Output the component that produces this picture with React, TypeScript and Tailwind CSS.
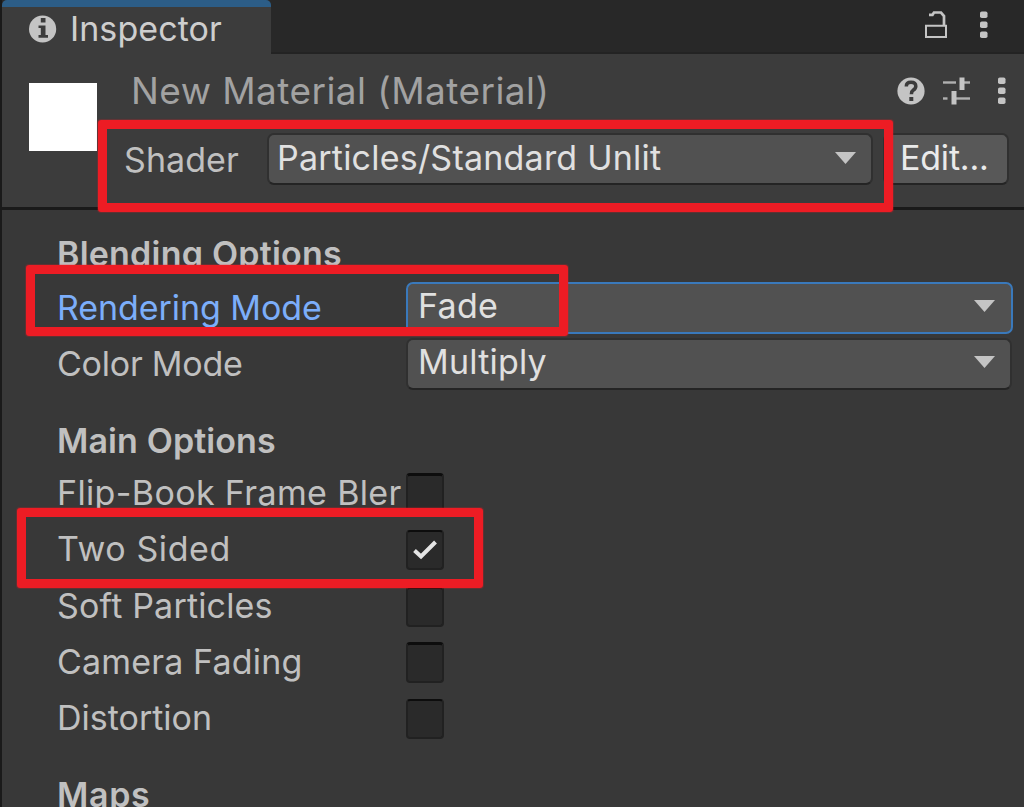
import type { ReactNode } from 'react';

function MenuDots({ className }: { className: string }) {
  return (
    <svg className={`shrink-0 ${className}`} viewBox="0 0 10 28" fill="#c4c4c4">
      <rect x="1" y="0.500" width="7.500" height="6.500" rx="1.800" />
      <rect x="1" y="10.500" width="7.500" height="6.500" rx="1.800" />
      <rect x="1" y="20.500" width="7.500" height="6.500" rx="1.800" />
    </svg>
  );
}

function InfoIcon() {
  return (
    <svg className="size-7 shrink-0" viewBox="0 0 28 28">
      <circle cx="13.600" cy="14" r="13.600" fill="#c4c4c4" />
      <rect x="11.800" y="3" width="4.700" height="4.500" fill="#3c3c3c" />
      <path d="M9.500 10.500h7V20h2.500v2.800H9.500V20h2.300v-7H9.500z" fill="#3c3c3c" />
    </svg>
  );
}

function LockIcon() {
  return (
    <svg className="h-7 w-[22px] shrink-0" viewBox="0 0 22 28" fill="none" stroke="#c4c4c4" strokeWidth="2">
      <path d="M1 15.800h20v11.200H1z" />
      <path d="M4 4.800h3.500L9 2.500h7L19 6v9" strokeWidth="2.700" />
    </svg>
  );
}

function HelpIcon() {
  return (
    <svg className="size-7 shrink-0" viewBox="0 0 28 28">
      <circle cx="14" cy="14" r="13.600" fill="#c4c4c4" />
      <path
        d="M9.300 9.500C9.300 6.500 11.200 5.300 14 5.300s4.800 1.400 4.800 3.900c0 2.300-1.300 3.200-2.700 4.100-1.300.8-1.700 1.400-1.700 3.900"
        fill="none"
        stroke="#3c3c3c"
        strokeWidth="3.500"
      />
      <rect x="12.300" y="20" width="4" height="4" fill="#3c3c3c" />
    </svg>
  );
}

function SlidersIcon() {
  return (
    <svg className="size-7 shrink-0" viewBox="0 0 28 28" fill="#c4c4c4">
      <rect x="0" y="4.300" width="13" height="2.400" opacity=".85" />
      <rect x="16.500" y="0.500" width="5" height="12.500" />
      <rect x="21" y="4.300" width="6" height="2.400" opacity=".85" />
      <rect x="0" y="20.300" width="4.500" height="2.400" opacity=".85" />
      <rect x="8.500" y="14" width="5" height="13.500" />
      <rect x="13" y="20.300" width="14" height="2.400" opacity=".85" />
    </svg>
  );
}

function Caret() {
  return (
    <svg className="h-3 w-[21px] shrink-0" viewBox="0 0 21 12" fill="#c4c4c4">
      <path d="M0 0h21L10.500 12z" />
    </svg>
  );
}

function Dropdown({ className, children }: { className: string; children: ReactNode }) {
  return (
    <div className={`flex items-center justify-between border-2 bg-[#515151] text-[#e0e0e0] ${className}`}>
      {children}
      <Caret />
    </div>
  );
}

function Checkbox({ checked = false, tall = false }: { checked?: boolean; tall?: boolean }) {
  return (
    <div
      className={`flex w-[38px] shrink-0 items-center justify-center rounded-[4px] border-2 border-[#212121] border-t-[#0d0d0d] bg-[#2a2a2a] ${
        tall ? 'h-[41px] border-t-[3px]' : 'h-10'
      }`}
    >
      {checked && (
        <svg className="h-5 w-6" viewBox="0 0 24 20" fill="none" stroke="#e4e4e4" strokeWidth="4">
          <path d="M1.500 10.500l6.500 6L22.500 2" />
        </svg>
      )}
    </div>
  );
}

interface ToggleProps {
  label: string;
  className: string;
  labelClass: string;
  checked?: boolean;
  tall?: boolean;
}

function Toggle({ label, className, labelClass, checked, tall }: ToggleProps) {
  return (
    <div className={`flex items-start ${className}`}>
      <span className={`w-[349px] shrink-0 whitespace-nowrap ${labelClass}`}>{label}</span>
      <Checkbox checked={checked} tall={tall} />
    </div>
  );
}

function Highlight({ className }: { className: string }) {
  return (
    <div
      className={`pointer-events-none absolute rounded-[3px] border-[9px] border-[#ed1c24] shadow-[0_0_1px_1px_rgba(237,28,36,0.25)] ${className}`}
    />
  );
}

export default function App() {
  return (
    <div className="relative flex h-[807px] w-[1024px] flex-col overflow-hidden border-l-2 border-[#1a1a1a] bg-[#383838] font-['Inter',sans-serif] text-[34px] leading-10 text-[#c0c0c0]">
      <div className="flex h-[54px] shrink-0 bg-[#282828]">
        <div className="flex w-[269px] gap-[13px] rounded-t-[5px] border-t-[7px] border-[#2c5d87] bg-[#3c3c3c] pt-[2px] pl-[27px]">
          <div className="pt-[6px]">
            <InfoIcon />
          </div>
          <span className="tracking-[0.07px] text-[#cecece]">Inspector</span>
        </div>
        <div className="flex flex-1 justify-end border-b-2 border-[#232323] pt-[10px] pr-[35px]">
          <LockIcon />
          <MenuDots className="mt-px ml-8 h-7 w-[10px]" />
        </div>
      </div>

      <div className="flex h-[156px] shrink-0 border-b-[3px] border-[#1a1a1a] bg-[#3c3c3c]">
        <div className="mt-[29px] ml-[27px] size-[68px] shrink-0 bg-white" />
        <div className="flex flex-1 flex-col">
          <div className="flex h-[76px] pt-[17px] pl-[34px]">
            <span className="text-[37px] tracking-[0.44px] whitespace-nowrap text-[#a2a2a2]">New Material (Material)</span>
            <div className="mt-[6px] mr-[17px] ml-auto flex">
              <HelpIcon />
              <div className="ml-[18px] flex">
                <SlidersIcon />
              </div>
              <MenuDots className="ml-[26px] h-7 w-[10px]" />
            </div>
          </div>
          <div className="flex pt-[3px] pl-[27px]">
            <span className="mt-[7px] w-[143px] tracking-[0.07px]">Shader</span>
            <Dropdown className="h-[52px] w-[606px] rounded-[7px] border-[#303030] border-b-[#242424] pr-[15px] pb-[2px] pl-[8px] tracking-[0.22px]">
              <span className="-mt-px">Particles/Standard Unlit</span>
            </Dropdown>
            <div className="ml-[10px] h-[52px] w-[126px] rounded-[7px] border-2 border-[#303030] border-b-[#242424] bg-[#585858] pt-[3px] pl-[15px] tracking-[-0.2px] text-[#eaeaea]">
              Edit...
            </div>
          </div>
        </div>
      </div>

      <div className="flex flex-col pl-[55px]">
        <h2 className="mt-6 font-semibold tracking-[0.22px]">Blending Options</h2>
        <div className="mt-2 flex">
          <span className="mt-[6px] w-[349px] tracking-[-0.07px] text-[#7caefa]">Rendering Mode</span>
          <Dropdown className="h-[52px] w-[607px] rounded-[7px] border-[#3a79bb] pr-[16px] pb-[4px] pl-[10px] tracking-[0.3px]">
            <span>Fade</span>
          </Dropdown>
        </div>
        <div className="mt-1 flex">
          <span className="mt-[6px] w-[349px] tracking-[-0.24px]">Color Mode</span>
          <Dropdown className="h-[52px] w-[606px] rounded-[7px] border-[#303030] border-b-[#242424] pr-[15px] pb-[4px] pl-[10px] tracking-[0.2px]">
            <span>Multiply</span>
          </Dropdown>
        </div>
        <h2 className="mt-[31px] font-semibold tracking-[0.1px]">Main Options</h2>
        <Toggle className="mt-[12px] h-[57px]" label="Flip-Book Frame Bler" labelClass="tracking-[0.36px]" tall />
        <Toggle className="h-[56px]" label="Two Sided" labelClass="-mt-px tracking-[0.6px]" checked />
        <Toggle className="h-[56px]" label="Soft Particles" labelClass="tracking-[0.18px]" tall />
        <Toggle className="h-[57px]" label="Camera Fading" labelClass="tracking-[0.16px]" tall />
        <Toggle className="h-[56px]" label="Distortion" labelClass="-mt-px tracking-normal" />
        <h2 className="mt-[20px] font-semibold tracking-[0.63px]">Maps</h2>
      </div>

      <Highlight className="top-[120px] left-[96px] h-[92px] w-[795px]" />
      <Highlight className="top-[265px] left-[24px] h-[71px] w-[542px]" />
      <Highlight className="top-[508px] left-[15px] h-[80px] w-[466px]" />
    </div>
  );
}
